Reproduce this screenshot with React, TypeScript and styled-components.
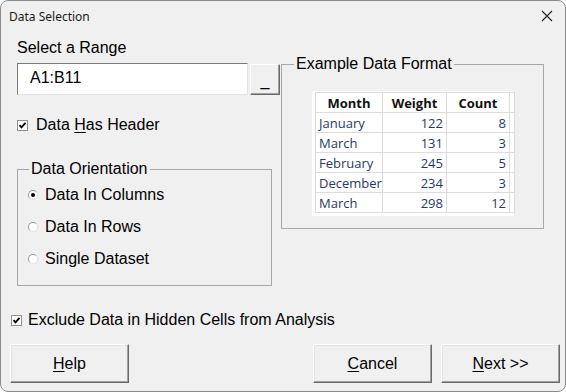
import React from 'react';
import styled, { createGlobalStyle } from 'styled-components';

const GlobalStyle = createGlobalStyle`
  html, body {
    margin: 0;
    padding: 0;
    background: #ffffff;
  }
  body {
    font-family: "Liberation Sans", Arial, sans-serif;
  }
`;

const Window = styled.div`
  width: 566px;
  height: 392px;
  box-sizing: border-box;
  border: 1px solid #8a8a8a;
  border-radius: 8px;
  background: #f0f0f0;
  display: flex;
  flex-direction: column;
  overflow: hidden;
  color: #000;
`;

const TitleBar = styled.div`
  height: 30px;
  display: flex;
  align-items: center;
  justify-content: space-between;
  padding: 0 12px 0 8px;
  font-family: "Noto Sans", "Open Sans", sans-serif;
  font-size: 12px;
  color: #1a1a1a;
`;

const CloseIcon = styled.svg`
  width: 12px;
  height: 12px;
`;

const Body = styled.div`
  flex: 1;
  display: flex;
  flex-direction: column;
  padding: 8px 5px 0 8px;
  font-size: 16px;
`;

const Columns = styled.div`
  display: flex;
  gap: 9px;
`;

const LeftColumn = styled.div`
  width: 255px;
  flex-shrink: 0;
  display: flex;
  flex-direction: column;
  padding-left: 8px;
`;

const Label = styled.div`
  line-height: 18px;
  height: 18px;
`;

const RangeRow = styled.div`
  display: flex;
  gap: 2px;
  margin-top: 6px;
`;

const RangeInput = styled.div`
  width: 231px;
  height: 32px;
  flex-shrink: 0;
  box-sizing: border-box;
  background: #fff;
  border-top: 1px solid #7a7a7a;
  border-left: 1px solid #7a7a7a;
  border-right: 1px solid #e3e3e3;
  border-bottom: 1px solid #e3e3e3;
  display: flex;
  align-items: center;
  padding-left: 12px;
  padding-bottom: 2px;
`;

const SmallButton = styled.div`
  width: 30px;
  height: 31px;
  flex-shrink: 0;
  box-sizing: border-box;
  margin-top: 1px;
  background: #f0f0f0;
  border-top: 1px solid #ffffff;
  border-left: 1px solid #ffffff;
  border-right: 1px solid #696969;
  border-bottom: 1px solid #696969;
  box-shadow: inset -1px -1px 0 #a0a0a0;
  display: flex;
  align-items: flex-end;
  justify-content: center;
  padding-bottom: 5px;
  line-height: 1;
`;

const CheckRow = styled.div<{ $top: number }>`
  display: flex;
  align-items: center;
  gap: 8px;
  height: 18px;
  margin-top: ${(p) => p.$top}px;
  line-height: 18px;
`;

const CheckBox = styled.div`
  width: 11px;
  height: 11px;
  box-sizing: border-box;
  background: #fff;
  border: 1px solid #8f8f8f;
  display: flex;
  align-items: center;
  justify-content: center;
`;

const Group = styled.fieldset<{ $w: number; $h: number }>`
  margin: 0;
  width: ${(p) => p.$w}px;
  height: ${(p) => p.$h}px;
  box-sizing: border-box;
  border: 1px solid #a8a8a8;
  padding: 0 10px;
`;

const Legend = styled.legend<{ $indent?: number }>`
  padding: 0 2px;
  margin-left: ${(p) => p.$indent ?? 1}px;
  line-height: 18px;
  font-size: 16px;
`;

const RadioList = styled.div`
  display: flex;
  flex-direction: column;
  gap: 14px;
  padding-top: 8px;
`;

const RadioRow = styled.div`
  display: flex;
  align-items: center;
  gap: 7px;
  height: 18px;
  line-height: 18px;
`;

const Radio = styled.div<{ $on?: boolean }>`
  width: 10px;
  height: 10px;
  border-radius: 50%;
  box-sizing: border-box;
  background: #fff;
  border: 1px solid #9a9a9a;
  border-color: #9a9a9a #e0e0e0 #e0e0e0 #9a9a9a;
  display: flex;
  align-items: center;
  justify-content: center;
  &::after {
    content: '';
    display: ${(p) => (p.$on ? 'block' : 'none')};
    width: 4px;
    height: 4px;
    border-radius: 50%;
    background: #000;
  }
`;

const RightColumn = styled.div`
  padding-top: 16px;
`;

const Sheet = styled.div`
  margin: 18px 0 0 20px;
  width: 202px;
  background: #fff;
  padding: 1px 0 3px 3px;
  box-sizing: border-box;
  font-family: "Open Sans", "Noto Sans", sans-serif;
  font-size: 13px;
`;

const Grid = styled.table`
  border-collapse: collapse;
  table-layout: fixed;
  width: 199px;
`;

const Col = styled.col<{ $w: number }>`
  width: ${(p) => p.$w}px;
`;

const Cell = styled.td<{ $right?: boolean; $head?: boolean }>`
  height: 19px;
  padding: 0 3px 0 3px;
  border: 1px solid #dcdcdc;
  text-align: ${(p) => (p.$head ? 'center' : p.$right ? 'right' : 'left')};
  font-weight: ${(p) => (p.$head ? 700 : 400)};
  color: ${(p) => (p.$head ? '#111' : '#1f3a68')};
  white-space: nowrap;
  line-height: 18px;
`;

const ButtonRow = styled.div`
  display: flex;
  margin-top: 15px;
  padding-left: 1px;
`;

const DialogButton = styled.button<{ $gap?: number }>`
  width: 120px;
  height: 39px;
  box-sizing: border-box;
  margin-left: ${(p) => p.$gap ?? 0}px;
  background: #f0f0f0;
  border: none;
  border-top: 1px solid #ffffff;
  border-left: 1px solid #ffffff;
  border-right: 1px solid #696969;
  border-bottom: 1px solid #696969;
  box-shadow: inset -1px -1px 0 #a0a0a0, inset 1px 1px 0 #e3e3e3;
  font-family: "Liberation Sans", Arial, sans-serif;
  font-size: 16px;
  color: #000;
  padding: 0;
`;

const Key = styled.span`
  text-decoration: underline;
  text-underline-offset: 2px;
`;

const CheckMark = () => (
  <svg width="9" height="9" viewBox="0 0 9 9">
    <path d="M1.5 4.2 L3.5 6.3 L7.5 1.8" stroke="#000" strokeWidth="1.8" fill="none" />
  </svg>
);

const rows = [
  ['January', '122', '8'],
  ['March', '131', '3'],
  ['February', '245', '5'],
  ['December', '234', '3'],
  ['March', '298', '12'],
];

export default function App() {
  return (
    <>
      <GlobalStyle />
      <Window>
        <TitleBar>
          <span>Data Selection</span>
          <CloseIcon viewBox="0 0 12 12">
            <path d="M1 1 L11 11 M11 1 L1 11" stroke="#222" strokeWidth="1.1" />
          </CloseIcon>
        </TitleBar>
        <Body>
          <Columns>
            <LeftColumn>
              <Label>Select a Range</Label>
              <RangeRow>
                <RangeInput>A1:B11</RangeInput>
                <SmallButton>_</SmallButton>
              </RangeRow>
              <CheckRow $top={21}>
                <CheckBox>
                  <CheckMark />
                </CheckBox>
                <span>
                  Data <Key>H</Key>as Header
                </span>
              </CheckRow>
              <div style={{ marginTop: 26 }}>
                <Group $w={255} $h={126}>
                  <Legend>Data Orientation</Legend>
                  <RadioList>
                    <RadioRow>
                      <Radio $on />
                      <span>Data In Columns</span>
                    </RadioRow>
                    <RadioRow>
                      <Radio />
                      <span>Data In Rows</span>
                    </RadioRow>
                    <RadioRow>
                      <Radio />
                      <span>Single Dataset</span>
                    </RadioRow>
                  </RadioList>
                </Group>
              </div>
            </LeftColumn>
            <RightColumn>
              <Group $w={263} $h={174}>
                <Legend $indent={2}>Example Data Format</Legend>
                <Sheet>
                  <Grid>
                    <colgroup>
                      <Col $w={67} />
                      <Col $w={64} />
                      <Col $w={63} />
                      <Col $w={5} />
                    </colgroup>
                    <tbody>
                      <tr>
                        <Cell $head>Month</Cell>
                        <Cell $head>Weight</Cell>
                        <Cell $head>Count</Cell>
                        <Cell />
                      </tr>
                      {rows.map((r, i) => (
                        <tr key={i}>
                          <Cell>{r[0]}</Cell>
                          <Cell $right>{r[1]}</Cell>
                          <Cell $right>{r[2]}</Cell>
                          <Cell />
                        </tr>
                      ))}
                    </tbody>
                  </Grid>
                </Sheet>
              </Group>
            </RightColumn>
          </Columns>
          <CheckRow $top={25}>
            <CheckBox style={{ marginLeft: 2 }}>
              <CheckMark />
            </CheckBox>
            <span style={{ marginLeft: -2 }}>Exclude Data in Hidden Cells from Analysis</span>
          </CheckRow>
          <ButtonRow>
            <DialogButton>
              <Key>H</Key>elp
            </DialogButton>
            <DialogButton $gap={184}>
              <Key>C</Key>ancel
            </DialogButton>
            <DialogButton $gap={9}>
              <Key>N</Key>ext &gt;&gt;
            </DialogButton>
          </ButtonRow>
        </Body>
      </Window>
    </>
  );
}
